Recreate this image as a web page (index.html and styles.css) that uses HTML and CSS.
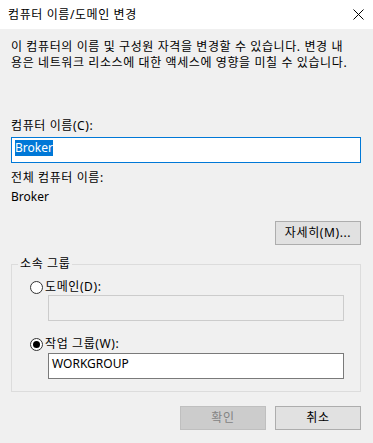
FILE: index.html
```html
<!DOCTYPE html>
<html lang="ko">
<head>
  <meta charset="UTF-8" />
  <title>컴퓨터 이름/도메인 변경</title>
  <link rel="stylesheet" href="styles.css">
</head>
<body>
  <div class="titlebar">
    <span>컴퓨터 이름/도메인 변경</span>
    <svg class="close" width="11" height="11" viewBox="0 0 11 11">
      <path d="M0.5 0.5 L10.5 10.5 M10.5 0.5 L0.5 10.5" stroke="#000" stroke-width="1" fill="none"/>
    </svg>
  </div>

  <div class="dialog">
    <p class="intro">이 컴퓨터의 이름 및 구성원 자격을 변경할 수 있습니다. 변경 내<br>용은 네트워크 리소스에 대한 액세스에 영향을 미칠 수 있습니다.</p>

    <div class="label name-label">컴퓨터 이름(C):</div>
    <div class="field focused"><span class="selected">Broker</span></div>

    <div class="label full-label">전체 컴퓨터 이름:</div>
    <div class="full-value">Broker</div>

    <div class="details-row">
      <button class="btn">자세히(M)...</button>
    </div>

    <fieldset class="group">
      <legend>소속 그룹</legend>
      <div class="radio-row first">
        <span class="radio"></span>
        <span>도메인(D):</span>
      </div>
      <div class="field disabled"></div>
      <div class="radio-row second">
        <span class="radio checked"></span>
        <span>작업 그룹(W):</span>
      </div>
      <div class="field">WORKGROUP</div>
    </fieldset>

    <div class="actions">
      <button class="btn" disabled>확인</button>
      <button class="btn">취소</button>
    </div>
  </div>
</body>
</html>
```

FILE: styles.css
```css
body {
  margin: 0;
  width: 373px;
  height: 443px;
  overflow: hidden;
  background: #f0f0f0;
  color: #000;
  font-family: "Noto Sans", "Noto Sans CJK KR", sans-serif;
  font-size: 12px;
  line-height: 16px;
  letter-spacing: 0.6px;
}

.titlebar {
  height: 29px;
  background: #fff;
  display: flex;
  align-items: center;
  justify-content: space-between;
  padding: 0 9px 0 8px;
}
.titlebar .close {
  margin-top: -1px;
}

.dialog {
  padding: 10px 12px 0 11px;
}

.intro {
  margin: 0;
}

.name-label {
  margin-top: 47px;
}

.field {
  border: 1px solid #7a7a7a;
  background: #fff;
  padding: 2px 3px 0;
  height: 22px;
  letter-spacing: 0;
}
.field.focused {
  margin-top: 3px;
  border-color: #0078d7;
}
.field.disabled {
  background: #f0f0f0;
  border-color: #cccccc;
}
.selected {
  background: #0078d7;
  color: #fff;
  display: inline-block;
}

.full-label {
  margin-top: 7px;
}
.full-value {
  margin-top: 3px;
  letter-spacing: 0;
}

.details-row,
.actions {
  display: flex;
  justify-content: flex-end;
  gap: 9px;
}
.details-row {
  margin-top: 16px;
}

.btn {
  width: 86px;
  height: 24px;
  padding: 0;
  font: inherit;
  letter-spacing: inherit;
  color: #000;
  background: #e1e1e1;
  border: 1px solid #adadad;
}
.btn:disabled {
  background: #cccccc;
  border-color: #bfbfbf;
  color: #838383;
}

.group {
  margin: 11px 0 0;
  padding: 0 16px 12px 18px;
  border: 1px solid #dcdcdc;
}
.group legend {
  margin-left: -12px;
  padding: 0 2px;
}
.group .field {
  margin-left: 18px;
}

.radio-row {
  display: flex;
  align-items: center;
  gap: 2px;
}
.radio-row.first {
  margin-top: 7px;
}
.radio-row.second {
  margin-top: 15px;
  margin-bottom: 1px;
}

.radio {
  width: 11px;
  height: 11px;
  border: 1px solid #333;
  border-radius: 50%;
  background: #fff;
  display: flex;
  align-items: center;
  justify-content: center;
}
.radio.checked::after {
  content: "";
  width: 7px;
  height: 7px;
  border-radius: 50%;
  background: #000;
}

.actions {
  margin-top: 14px;
}
```
